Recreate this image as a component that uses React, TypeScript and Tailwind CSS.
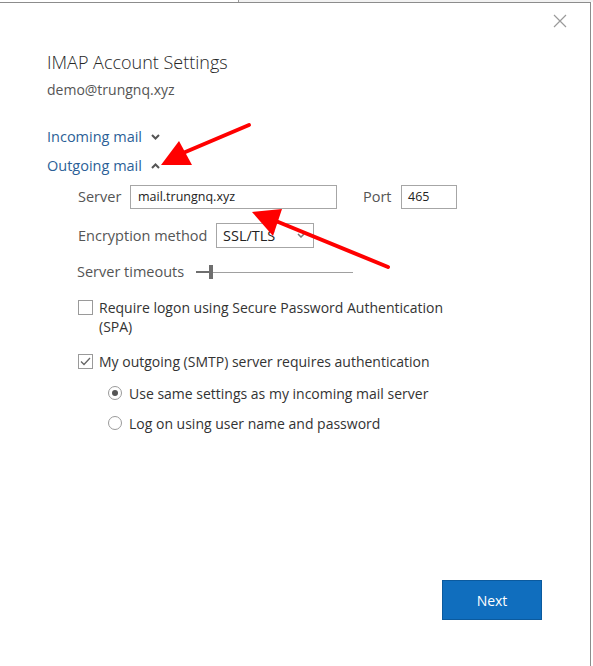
import React from 'react';

const font = { fontFamily: '"Open Sans", "Noto Sans", sans-serif' };

const Chevron = ({ up }: { up?: boolean }) => (
  <svg width="9" height="6" viewBox="0 0 9 6" className="ml-[9px]">
    <path
      d={up ? 'M1 5 L4.5 1.5 L8 5' : 'M1 1 L4.5 4.5 L8 1'}
      fill="none"
      stroke="#555"
      strokeWidth="2"
    />
  </svg>
);

const Checkbox = ({ checked }: { checked?: boolean }) => (
  <span className="w-[15px] h-[15px] border border-[#9a9a9a] bg-white flex items-center justify-center shrink-0">
    {checked && (
      <svg width="11" height="9" viewBox="0 0 11 9">
        <path d="M1 4.5 L4 7.5 L10 1" fill="none" stroke="#666" strokeWidth="1.3" />
      </svg>
    )}
  </span>
);

const Radio = ({ checked }: { checked?: boolean }) => (
  <span className="w-[14px] h-[14px] rounded-full border border-[#9a9a9a] bg-white flex items-center justify-center shrink-0">
    {checked && <span className="w-[6px] h-[6px] rounded-full bg-[#555]" />}
  </span>
);

const App: React.FC = () => {
  return (
    <div className="w-[593px] h-[666px] bg-white flex flex-col overflow-hidden" style={font}>
      <div className="h-[2px] flex shrink-0">
        <div className="w-[238px] bg-white" />
        <div className="w-px bg-[#9a9a9a]" />
        <div className="flex-1 bg-[#f2f2f2]" />
      </div>

      <div className="relative flex-1 w-[591px] border-t border-r border-[#8c8c8c] flex flex-col">
        <div className="h-[47px] flex justify-end pt-[11px] pr-[23px] shrink-0">
          <svg width="14" height="14" viewBox="0 0 14 14">
            <path d="M1 1 L13 13 M13 1 L1 13" stroke="#9a9a9a" strokeWidth="1.2" />
          </svg>
        </div>

        <div className="pl-[47px] flex flex-col">
          <h1 className="h-[24px] leading-[24px] text-[18px] font-light text-[#262626]">
            IMAP Account Settings
          </h1>
          <div className="mt-[6px] h-[20px] leading-[20px] text-[14px] text-[#555]">
            demo@trungnq.xyz
          </div>

          <div className="mt-[27px] h-[20px] flex items-center text-[14.5px] text-[#2c5f97]">
            <span className="leading-[20px]">Incoming mail</span>
            <Chevron />
          </div>
          <div className="mt-[9px] h-[20px] flex items-center text-[14.5px] text-[#2c5f97]">
            <span className="leading-[20px]">Outgoing mail</span>
            <Chevron up />
          </div>

          <div className="pl-[31px] flex flex-col text-[14.5px] text-[#555]">
            <div className="mt-[9px] h-[24px] flex items-center">
              <span className="w-[52px]">Server</span>
              <div className="w-[207px] h-[24px] border border-[#a6a6a6] flex items-center px-[7px] text-[12.5px] text-[#222]">
                mail.trungnq.xyz
              </div>
              <span className="ml-[26px] w-[38px]">Port</span>
              <div className="w-[56px] h-[24px] border border-[#a6a6a6] flex items-center px-[6px] text-[12.5px] text-[#222]">
                465
              </div>
            </div>

            <div className="mt-[14px] h-[25px] flex items-center">
              <span className="w-[138px]">Encryption method</span>
              <div className="w-[98px] h-[25px] border border-[#a6a6a6] flex items-center justify-between pl-[6px] pr-[8px] text-[14.5px] text-[#222]">
                <span>SSL/TLS</span>
                <svg width="8" height="5" viewBox="0 0 8 5">
                  <path d="M1 1 L4 4 L7 1" fill="none" stroke="#777" strokeWidth="1.5" />
                </svg>
              </div>
            </div>

            <div className="mt-[14px] h-[20px] flex items-center -ml-px">
              <span className="w-[119px]">Server timeouts</span>
              <div className="relative w-[157px] h-[14px] flex items-center">
                <div className="w-[14px] h-[2px] bg-[#6e6e6e]" />
                <div className="flex-1 h-px bg-[#a0a0a0]" />
                <div className="absolute left-[13px] top-0 w-[4px] h-[14px] bg-[#6e6e6e]" />
              </div>
            </div>

            <div className="mt-[16px] flex items-start text-[14px] text-[#333]">
              <span className="mt-[2px]">
                <Checkbox />
              </span>
              <span className="ml-[6px] w-[360px] leading-[19px]">
                Require logon using Secure Password Authentication (SPA)
              </span>
            </div>

            <div className="mt-[15px] h-[20px] flex items-center text-[14px] text-[#333]">
              <Checkbox checked />
              <span className="ml-[6px]">My outgoing (SMTP) server requires authentication</span>
            </div>

            <div className="pl-[30px] flex flex-col text-[14px] text-[#333]">
              <div className="mt-[12px] h-[20px] flex items-center">
                <Radio checked />
                <span className="ml-[7px]">Use same settings as my incoming mail server</span>
              </div>
              <div className="mt-[10px] h-[20px] flex items-center">
                <Radio />
                <span className="ml-[7px]">Log on using user name and password</span>
              </div>
            </div>
          </div>
        </div>

        <div className="mt-auto flex justify-end pr-[48px] pb-[46px]">
          <button className="w-[100px] h-[40px] bg-[#106ebe] border border-[#0b5a9e] text-white text-[14px]">
            Next
          </button>
        </div>

        <svg
          className="absolute pointer-events-none"
          style={{ left: -1, top: -3 }}
          width="593"
          height="666"
          viewBox="0 0 593 666"
        >
          <line x1="250" y1="125" x2="184" y2="153" stroke="#ff0000" strokeWidth="4" strokeLinecap="round" />
          <polygon points="162,165 180,141 193,165" fill="#ff0000" />
          <line x1="389" y1="267" x2="272" y2="219" stroke="#ff0000" strokeWidth="4" strokeLinecap="round" />
          <polygon points="253,212 283,209 274,236" fill="#ff0000" />
        </svg>
      </div>
    </div>
  );
};

export default App;
